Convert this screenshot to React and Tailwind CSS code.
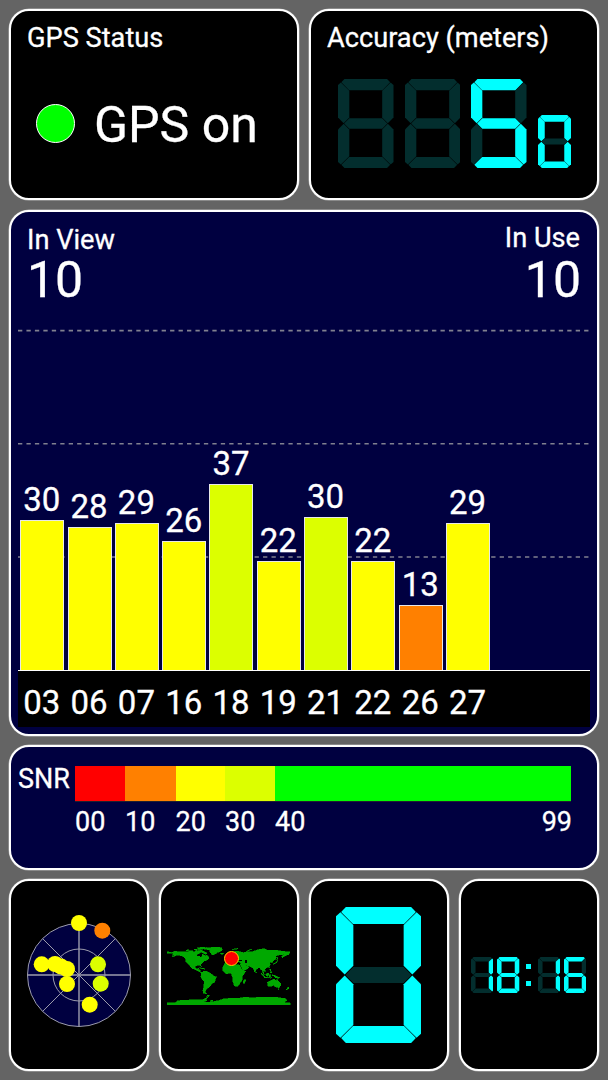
const satellites = [
  { prn: '03', snr: 30, height: 150, color: '#ffff00', x: 41.7, y: 84.3 },
  { prn: '06', snr: 28, height: 143, color: '#ffff00', x: 55, y: 84 },
  { prn: '07', snr: 29, height: 147, color: '#ffff00', x: 61, y: 86.5 },
  { prn: '16', snr: 26, height: 129, color: '#ffff00', x: 67, y: 89 },
  { prn: '18', snr: 37, height: 186, color: '#dcff00', x: 98, y: 84.3 },
  { prn: '19', snr: 22, height: 109, color: '#ffff00', x: 67, y: 104 },
  { prn: '21', snr: 30, height: 153, color: '#dcff00', x: 100.7, y: 103.7 },
  { prn: '22', snr: 22, height: 109, color: '#ffff00', x: 89.7, y: 124.7 },
  { prn: '26', snr: 13, height: 65, color: '#ff8000', x: 102.3, y: 50.7 },
  { prn: '27', snr: 29, height: 147, color: '#ffff00', x: 79, y: 43 },
];

const segments = {
  a: '5.8,0 44.2,0 47,3 40,10 10,10 3,3',
  b: '47.4,3.1 50,5.5 50,34.6 44.9,39.7 39.8,34.6 39.8,10.6',
  c: '44.9,40.3 50,45.4 50,74.5 47.4,76.9 39.8,69.4 39.8,45.4',
  d: '5.8,80 44.2,80 47,77 40,70 10,70 3,77',
  e: '5.1,40.3 10.2,45.4 10.2,69.4 2.6,76.9 0,74.5 0,45.4',
  f: '2.6,3.1 0,5.5 0,34.6 5.1,39.7 10.2,34.6 10.2,10.6',
  g: '5.5,40 10.2,35.3 39.8,35.3 44.5,40 39.8,44.7 10.2,44.7',
};

const digits = {
  ' ': '',
  0: 'abcdef',
  1: 'bc',
  5: 'acdfg',
  6: 'acdefg',
  8: 'abcdefg',
};

function Digit({ value, className }) {
  return (
    <svg viewBox="0 0 50 80" preserveAspectRatio="none" className={`shrink-0 ${className}`}>
      {Object.entries(segments).map(([name, points]) => (
        <polygon key={name} points={points} fill={digits[value].includes(name) ? '#00ffff' : '#032e2e'} />
      ))}
    </svg>
  );
}

function Panel({ className = '', children }) {
  return (
    <section className={`rounded-[20px] border-2 border-white shadow-[0_0_0_0.5px_#ffffff80] ${className}`}>
      {children}
    </section>
  );
}

function StatusPanel() {
  return (
    <Panel className="bg-black pt-[14px]">
      <h2 className="pl-4 text-[27.2px] leading-[26px]">GPS Status</h2>
      <div className="mt-[49px] flex items-start pl-[25px]">
        <span className="mt-1 size-[39px] rounded-full border border-white bg-[#00ff00]" />
        <span className="ml-[19px] text-[50px] leading-[50px] whitespace-nowrap">GPS on</span>
      </div>
    </Panel>
  );
}

function AccuracyPanel() {
  return (
    <Panel className="bg-black pt-[14px]">
      <h2 className="pl-4 text-[27.2px] leading-[26px]">Accuracy (meters)</h2>
      <div className="mt-[28px] flex items-end gap-[11px] pl-[27px]">
        <Digit value=" " className="h-[89px] w-[55.5px]" />
        <Digit value=" " className="h-[89px] w-[55.5px]" />
        <Digit value="5" className="h-[89px] w-[55.5px]" />
        <Digit value="0" className="h-[53px] w-[33px]" />
      </div>
    </Panel>
  );
}

function SignalPanel() {
  return (
    <Panel className="flex flex-col bg-[#000040] px-[7px] pb-[7px]">
      <div className="flex h-[93px] justify-between pr-[9px] pl-[9px]">
        <div className="pt-[15px]">
          <div className="text-[27.2px] leading-[26px]">In View</div>
          <div className="mt-[2px] text-[50px] leading-[50px]">10</div>
        </div>
        <div className="pt-[13px] text-right">
          <div className="pr-px text-[27.2px] leading-[26px]">In Use</div>
          <div className="mt-1 text-[50px] leading-[50px]">10</div>
        </div>
      </div>
      <div className="relative flex flex-1 items-end gap-[3.3px] border-b border-white pl-[2.3px]">
        <svg
          className="absolute inset-0 h-full w-full"
          fill="none"
          stroke="#80808f"
          strokeWidth="1.6"
          strokeDasharray="4.3 4.15"
        >
          <path d="M0 25.6H572M0 138.7H572M0 252H572" />
        </svg>
        {satellites.map((sat) => (
          <div key={sat.prn} className="relative flex w-11 flex-col items-center">
            <span className="mr-px mb-1 text-[33px] leading-[33px]">{sat.snr}</span>
            <div
              className="w-full border border-b-0 border-[#e8e8e8]"
              style={{ height: sat.height, backgroundColor: sat.color }}
            />
          </div>
        ))}
      </div>
      <div className="flex h-14 gap-[3.3px] bg-black pt-[15px] pl-[1.8px]">
        {satellites.map((sat) => (
          <span key={sat.prn} className="w-11 text-center text-[33px] leading-[33px]">{sat.prn}</span>
        ))}
      </div>
    </Panel>
  );
}

function ScalePanel() {
  return (
    <Panel className="flex bg-[#000040] pt-[19px] pl-[7px]">
      <span className="w-[57px] text-[27px] leading-[26px]">SNR</span>
      <div className="w-[496px]">
        <div className="flex h-[36px] border-b border-[#202030]">
          <div className="w-[50px] bg-[#ff0000]" />
          <div className="w-[50.5px] bg-[#ff8000]" />
          <div className="w-[49.5px] bg-[#ffff00]" />
          <div className="w-[50px] bg-[#dcff00]" />
          <div className="flex-1 bg-[#00ff00]" />
        </div>
        <div className="mt-[7px] flex text-[27px] leading-[27px]">
          <span className="w-[50px]">00</span>
          <span className="w-[50.5px]">10</span>
          <span className="w-[49.5px]">20</span>
          <span className="w-[50px]">30</span>
          <span>40</span>
          <span className="-mr-px ml-auto">99</span>
        </div>
      </div>
    </Panel>
  );
}

function SkyPanel() {
  return (
    <Panel className="bg-black">
      <svg viewBox="11 1 136 188" className="h-full w-full">
        <g fill="none" stroke="#9c9cac">
          <circle cx="79" cy="95" r="51.5" fill="#000040" />
          <circle cx="79" cy="95" r="26" />
          <path d="M27.5 95H130.5M79 43.5V146.5" strokeWidth="1.4" />
          <path d="M42.6 58.6L115.4 131.4M42.6 131.4L115.4 58.6" />
        </g>
        {satellites.map((sat) => (
          <circle key={sat.prn} cx={sat.x} cy={sat.y} r="8" fill={sat.color} />
        ))}
      </svg>
    </Panel>
  );
}

// Land outlines in degrees: x = longitude, y = -latitude
const land = [
  'M-168-66L-160-71L-140-70L-125-70L-110-69L-95-71L-94-74L-85-71L-82-67L-87-64L-94-60L-92-57L-82-55L-80-51L-78-55L-76-62L-68-58L-64-60L-56-52L-60-47L-65-43L-70-43L-76-37L-81-31L-80-25L-83-29L-90-30L-97-27L-97-20L-91-18L-87-21L-88-16L-83-15L-83-9L-77-8L-80-7L-86-11L-94-15L-105-19L-111-25L-118-33L-125-40L-125-48L-133-56L-145-60L-152-59L-165-54L-158-58L-165-60L-162-64z',
  'M-180-70L-168-68L-168-65L-180-65z',
  'M-80-74L-70-70L-62-65L-66-62L-72-65L-80-68L-90-72z',
  'M-118-73L-104-73L-104-69L-116-69zM-125-74L-116-76L-118-72zM-100-77L-92-77L-92-74L-98-74zM-92-82L-75-83L-62-82L-75-78L-88-77zM-90-76L-80-76L-80-74L-90-74z',
  'M-72-78L-60-82L-35-83.5L-20-82L-18-76L-22-71L-32-68L-42-61L-48-61L-53-67L-56-75z',
  'M-24-66L-14-66L-16-63L-22-63z',
  'M-85-22L-75-20L-74-19L-84-21zM-74-20L-68-19L-71-17z',
  'M-79-8L-72-12L-61-10L-51-4L-44 2L-35 6L-38 13L-40 21L-48 26L-54 34L-58 38L-64 41L-66 46L-68 50L-69 54L-73 53L-75 47L-73 38L-71 20L-76 14L-81 6L-80 1z',
  'M-72 51L-64 55L-68 56L-74 54z',
  'M-9-43L-9-37L-5-36L0-39L5-43L11-42L16-38L19-40L14-45L20-41L23-36L27-40L36-36L34-31L38-24L43-13L54-17L59-23L56-26L50-30L57-27L66-25L72-20L77-8L80-15L88-22L93-21L95-16L99-16L101-6L104-1L103-7L100-12L105-11L109-12L106-18L110-21L118-24L122-31L119-37L126-38L128-35L130-42L138-48L141-54L136-54L142-59L156-61L163-62L156-57L157-51L162-56L170-60L178-62L178-65L180-69L160-71L140-74L112-75L104-79L87-76L68-69L60-70L44-67L32-70L24-72L14-68L5-61L6-58L12-56L18-60L21-65L24-60L20-54L10-55L2-51L-4-48L-1-44z',
  'M-6-50L2-51L-2-57L-6-58zM-10-52L-6-52L-6-55L-10-54zM10-77L28-80L25-78L16-77zM52-71L68-77L60-75L56-71z',
  'M-10-35L10-37L12-32L20-31L32-31L37-21L43-11L51-12L45-2L40 4L40 15L35 22L32 29L26 34L18 34L12 18L13 8L9-1L8-5L-8-4L-17-13L-17-22z',
  'M44 16L49 12L50 16L47 25L43 24z',
  'M129-33L136-35L141-41L145-44L140-36L133-33zM141-46L144-53L143-46zM120-24L122-25L121-22zM108-20L111-20L109-18z',
  'M120-18L123-18L124-13L120-14zM122-10L126-9L126-6L122-7z',
  'M95-5L99-4L106 5L105 6L99 0zM105 6L115 8L115 9L105 8zM109-2L117-7L118 0L115 4L110 2zM119 0L125-2L122 1L123 5L120 5zM117 8L127 8L123 10zM128-1L130 1L128 4zM131 1L138 2L150 8L148 10L138 8L132 4zM80-10L82-7L80-6z',
  'M114 22L122 18L129 14L136 12L136 15L141 17L142 11L146 19L153 26L152 34L147 39L138 35L131 31L124 34L115 34z',
  'M145 41L148 41L147 44zM173 35L178 38L175 42L168 46L167 45L173 40z',
  'M-180 83L-155 83L-150 77L-120 75L-100 74L-75 74L-60 66L-56 63L-66 73L-62 77L-75 79L-60 82L-40 79L-30 77L-12 71L10 70L35 69L52 66L70 69L90 66L115 66L140 67L168 71L170 77L160 82L180 84L180 89L-180 89z',
  'M-62 61L-56 60L-58 63L-64 65zM-50 75L-44 77L-48 79L-54 78z',
];

function MapPanel() {
  return (
    <Panel className="flex items-center bg-black pl-[6px]">
      <div className="relative h-[60px] w-[123px]">
        <svg
          viewBox="-180 -90 360 180"
          preserveAspectRatio="none"
          className="h-full w-full overflow-visible"
          shapeRendering="crispEdges"
        >
          <path d={land.join('')} fill="#00a800" stroke="#00a800" strokeWidth="1.6" />
          <path d="M28-41L41-41L40-46L30-46zM48-37L53-37L53-45L48-45z" fill="#000000" />
        </svg>
        <span className="absolute top-[6px] left-[57px] size-[15px] rounded-full border border-[#ffd000] bg-[#ff0000]" />
      </div>
    </Panel>
  );
}

function SpeedPanel() {
  return (
    <Panel className="flex items-center bg-black pl-[25px]">
      <Digit value="0" className="h-[136px] w-[85px]" />
    </Panel>
  );
}

function ClockPanel() {
  return (
    <Panel className="flex items-center bg-black pl-[10px]">
      <Digit value="1" className="h-9 w-[22.3px]" />
      <Digit value="8" className="ml-1 h-9 w-[22.3px]" />
      <div className="mx-[6.8px] flex flex-col gap-[12.6px]">
        <div className="size-[4.7px] bg-[#00ffff]" />
        <div className="size-[4.7px] bg-[#00ffff]" />
      </div>
      <Digit value="1" className="h-9 w-[22.3px]" />
      <Digit value="6" className="ml-1 h-9 w-[22.3px]" />
    </Panel>
  );
}

export default function App() {
  return (
    <main className="flex h-[1080px] w-[608px] flex-col overflow-hidden bg-[#646464] px-[9px] pt-[9px] font-['Roboto',sans-serif] text-white [-webkit-text-stroke:0.3px_white]">
      <div className="grid h-[191px] grid-cols-2 gap-[10px]">
        <StatusPanel />
        <AccuracyPanel />
      </div>
      <div className="mt-[10px] grid h-[526px]">
        <SignalPanel />
      </div>
      <div className="mt-[9px] grid h-[125px]">
        <ScalePanel />
      </div>
      <div className="mt-[9px] grid h-[192px] grid-cols-4 gap-[10px]">
        <SkyPanel />
        <MapPanel />
        <SpeedPanel />
        <ClockPanel />
      </div>
    </main>
  );
}
